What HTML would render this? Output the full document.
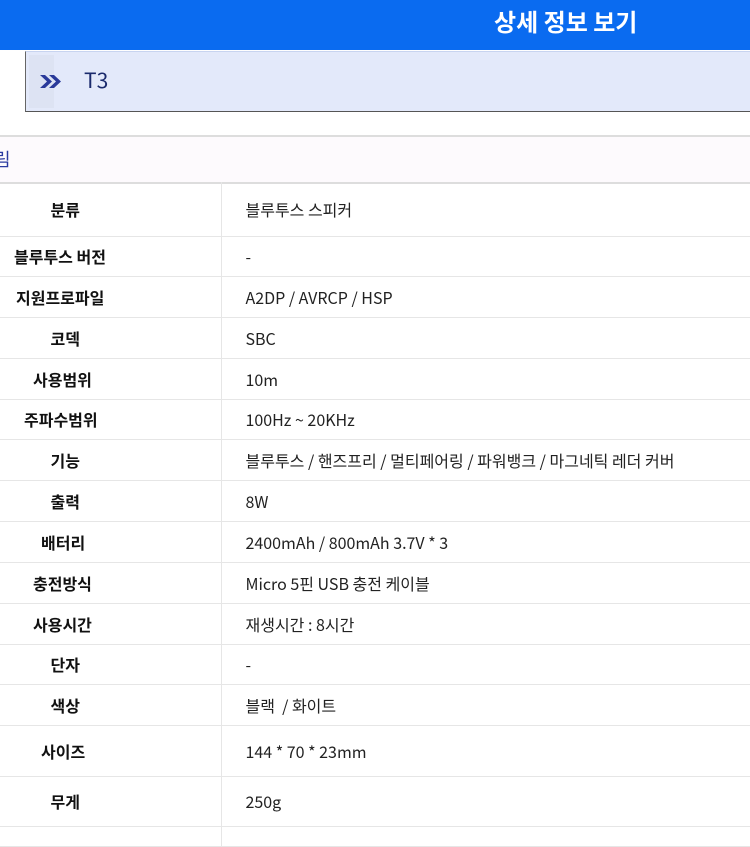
<!DOCTYPE html>
<html><head><meta charset="utf-8"><style>
body{margin:0;width:750px;height:832px;overflow:hidden;background:#fff;font-family:"Noto Sans CJK KR","Liberation Sans",sans-serif;position:relative}
.hdr{position:absolute;left:0;top:0;width:750px;height:50px;background:#0a6bf0}
.hdr span{position:absolute;left:494px;top:5px;color:#fff;font-size:24px;line-height:32px;font-weight:bold}
.box{position:absolute;left:25px;top:51px;width:725px;height:59px;background:#e3e9fa;border-left:1px solid #666;border-bottom:1px solid #555;border-top:1px solid #c8d4f0}
.ic{position:absolute;left:3px;top:3px;width:25px;height:53px;background:#dde3f3}
.box .t{position:absolute;left:58px;top:14px;font-size:21px;line-height:28px;color:#1a2a6c}
.strip{position:absolute;left:0;top:135px;width:750px;height:45px;background:#fdfafd;border-top:2px solid #ddd;border-bottom:2px solid #ddd}
.strip span{position:absolute;left:-6px;top:10px;color:#2a3aa0;font-size:18px;line-height:24px}
table{position:absolute;left:0;top:182px;width:750px;border-collapse:collapse}
td{border-bottom:1px solid #e6e6e6;padding:0;font-size:16px;line-height:20px;color:#222;vertical-align:middle}
td.l{width:221px;text-align:center;font-weight:bold;border-right:1px solid #e6e6e6;padding-right:90px;box-sizing:border-box;color:#111}
td.v{padding-left:24px}
</style></head><body>
<div class="hdr"><span>상세 정보 보기</span></div>
<div class="box"><div class="ic"><svg width="30" height="53" style="position:absolute;left:9px;top:0"><path d="M2 20 L9 26.5 L2 33 L7 33 L14 26.5 L7 20Z M11 20 L18 26.5 L11 33 L16 33 L23 26.5 L16 20Z" fill="#2a3a9a"/></svg></div><span class="t">T3</span></div>
<div class="strip"><span>림</span></div>
<table>
<tr style="height:54px"><td class="l">분류</td><td class="v">블루투스 스피커</td></tr>
<tr style="height:40px"><td class="l" style="padding-right:0;text-align:left;padding-left:14px">블루투스 버전</td><td class="v">-</td></tr>
<tr style="height:41px"><td class="l" style="padding-right:0;text-align:left;padding-left:16px">지원프로파일</td><td class="v">A2DP / AVRCP / HSP</td></tr>
<tr style="height:41px"><td class="l">코덱</td><td class="v">SBC</td></tr>
<tr style="height:41px"><td class="l" style="padding-right:0;text-align:left;padding-left:33px">사용범위</td><td class="v">10m</td></tr>
<tr style="height:40px"><td class="l" style="padding-right:0;text-align:left;padding-left:24px">주파수범위</td><td class="v">100Hz ~ 20KHz</td></tr>
<tr style="height:41px"><td class="l">기능</td><td class="v">블루투스 / 핸즈프리 / 멀티페어링 / 파워뱅크 / 마그네틱 레더 커버</td></tr>
<tr style="height:41px"><td class="l">출력</td><td class="v">8W</td></tr>
<tr style="height:41px"><td class="l" style="padding-right:0;text-align:left;padding-left:41px">배터리</td><td class="v">2400mAh / 800mAh 3.7V * 3</td></tr>
<tr style="height:41px"><td class="l" style="padding-right:0;text-align:left;padding-left:33px">충전방식</td><td class="v">Micro 5핀 USB 충전 케이블</td></tr>
<tr style="height:41px"><td class="l" style="padding-right:0;text-align:left;padding-left:33px">사용시간</td><td class="v">재생시간 : 8시간</td></tr>
<tr style="height:40px"><td class="l">단자</td><td class="v">-</td></tr>
<tr style="height:41px"><td class="l">색상</td><td class="v">블랙 &nbsp;/ 화이트</td></tr>
<tr style="height:51px"><td class="l" style="padding-right:0;text-align:left;padding-left:41px">사이즈</td><td class="v">144 * 70 * 23mm</td></tr>
<tr style="height:50px"><td class="l">무게</td><td class="v">250g</td></tr>
<tr style="height:20px"><td class="l"></td><td class="v"></td></tr>
</table>
</body></html>
